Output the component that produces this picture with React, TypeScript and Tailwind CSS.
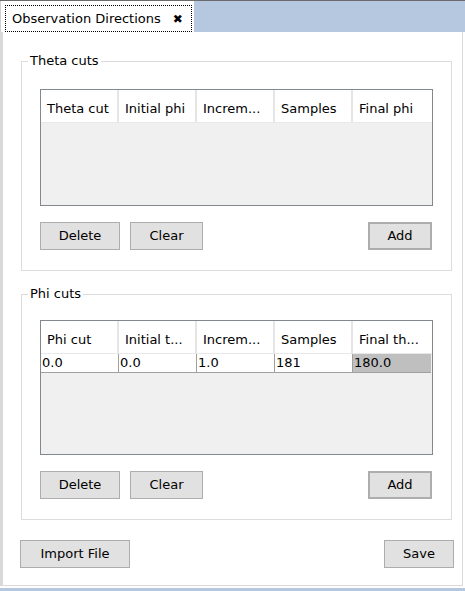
import React from "react";

const font = { fontFamily: '"DejaVu Sans", "Liberation Sans", sans-serif' };

function Btn({ label, w, primary }: { label: string; w: string; primary?: boolean }) {
  return (
    <button
      className={`${w} h-[28px] bg-[#e1e1e1] text-[13px] text-black flex items-center justify-center ${
        primary ? "border-2 border-[#adadad]" : "border border-[#adadad]"
      }`}
    >
      {label}
    </button>
  );
}

function Table({ headers, rows, height }: { headers: string[]; rows: string[][]; height: string }) {
  return (
    <div className={`${height} border border-[#828790] bg-[#f0f0f0] flex flex-col`}>
      <div className="flex h-[33px] bg-white border-b border-[#e8e8e8] shrink-0">
        {headers.map((h, i) => (
          <div
            key={i}
            className={`w-[78px] h-full flex items-center pt-[5px] pl-[6px] text-[13px] text-black whitespace-nowrap overflow-hidden ${
              i < headers.length - 1 ? "border-r-2 border-[#e5e5e5]" : ""
            }`}
          >
            {h}
          </div>
        ))}
      </div>
      {rows.map((r, ri) => (
        <div key={ri} className="flex h-[19px] shrink-0">
          {r.map((c, ci) => (
            <div
              key={ci}
              className={`w-[78px] h-full flex items-center pl-[1px] text-[13px] text-black border-b border-[#a0a0a0] ${
                ci < r.length - 1 ? "border-r border-[#7a7a7a] bg-white" : "bg-[#bfbfbf]"
              }`}
            >
              {c}
            </div>
          ))}
        </div>
      ))}
    </div>
  );
}

function Group({
  title,
  headers,
  rows,
  tableH,
  className,
  pt,
}: {
  title: string;
  headers: string[];
  rows: string[][];
  tableH: string;
  className: string;
  pt: string;
}) {
  return (
    <fieldset className={`w-[431px] border border-[#dcdcdc] pb-[20px] ${className}`}>
      <legend className="ml-[6px] px-[2px] text-[13px] leading-[16px] text-black">{title}</legend>
      <div className={`${pt} px-[18px]`}>
        <Table headers={headers} rows={rows} height={tableH} />
        <div className="flex mt-[16px] pr-[1px]">
          <Btn label="Delete" w="w-[80px]" />
          <div className="w-[10px]" />
          <Btn label="Clear" w="w-[73px]" />
          <div className="flex-1" />
          <Btn label="Add" w="w-[64px]" primary />
        </div>
      </div>
    </fieldset>
  );
}

export default function App() {
  return (
    <div className="w-[465px] h-[591px] flex flex-col bg-white border-t border-[#6b6b6b] overflow-hidden" style={font}>
      <div className="h-[31px] flex bg-[#b6c8e0] shrink-0">
        <div className="w-[194px] h-full bg-white border-l border-[#d0d0d0]">
          <div className="mt-[4px] ml-[4px] mr-[2px] h-[27px] border border-dotted border-black flex items-center pl-[6px] text-[13px] text-black">
            <span>Observation Directions</span>
            <span className="ml-[12px] text-[12px] font-bold leading-none">✖</span>
          </div>
        </div>
        <div className="flex-1" />
      </div>
      <div className="h-[554px] shrink-0 bg-white border-l-[3px] border-r border-b border-[#d9d9d9] mr-[2px] flex flex-col pt-[21px]">
        <Group
          title="Theta cuts"
          headers={["Theta cut", "Initial phi", "Increm...", "Samples", "Final phi"]}
          rows={[]}
          tableH="h-[117px]"
          className="ml-[18px]"
          pt="pt-[20px]"
        />
        <Group
          title="Phi cuts"
          headers={["Phi cut", "Initial t...", "Increm...", "Samples", "Final th..."]}
          rows={[["0.0", "0.0", "1.0", "181", "180.0"]]}
          tableH="h-[135px]"
          className="ml-[18px] mt-[15px]"
          pt="pt-[18px]"
        />
        <div className="flex mt-[20px] ml-[17px] mr-[8px]">
          <Btn label="Import File" w="w-[110px]" />
          <div className="flex-1" />
          <Btn label="Save" w="w-[70px]" />
        </div>
      </div>
      <div className="h-[2px] shrink-0 bg-white" />
      <div className="flex-1 bg-[#b6c8e0]" />
    </div>
  );
}
